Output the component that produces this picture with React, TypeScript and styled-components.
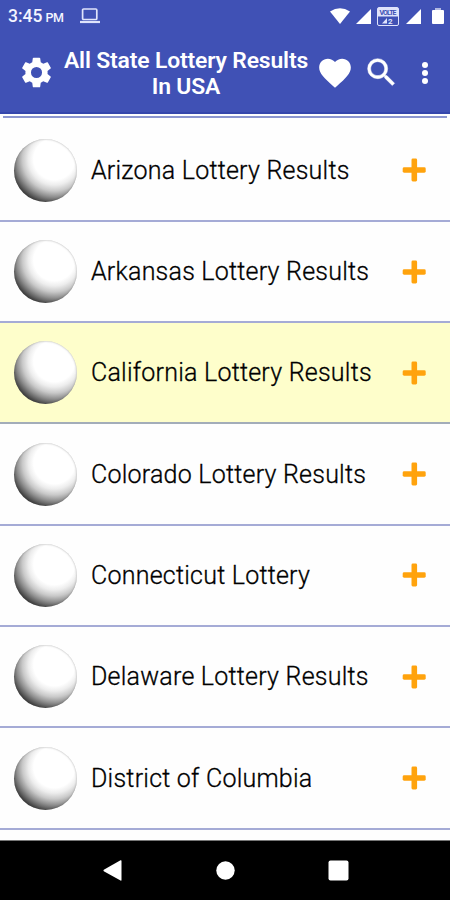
import React from 'react';
import styled, { createGlobalStyle } from 'styled-components';

const GlobalStyle = createGlobalStyle`
  * { box-sizing: border-box; }
  body { margin: 0; background: #fff; font-family: Roboto, sans-serif; }
`;

const Screen = styled.div`
  width: 450px;
  height: 900px;
  display: flex;
  flex-direction: column;
  overflow: hidden;
  background: #fefefe;
`;

const StatusBar = styled.div`
  flex: none;
  height: 32px;
  display: flex;
  align-items: center;
  justify-content: space-between;
  padding: 0 6px 0 8px;
  background: #4051b5;
  color: #f4f5ff;
`;

const StatusGroup = styled.div`
  display: flex;
  align-items: center;
`;

const Clock = styled.span`
  width: 72px;
  padding-top: 2px;
  font-size: 17.5px;
  font-weight: 500;
  line-height: 32px;
  white-space: nowrap;
`;

const Meridiem = styled.span`
  margin-left: 3px;
  font-size: 12.5px;
  letter-spacing: -0.4px;
`;

const Glyph = styled.svg<{ $gap?: number }>`
  display: block;
  flex: none;
  margin-left: ${({ $gap = 0 }) => $gap}px;
  overflow: visible;
`;

const AppBar = styled.header`
  flex: none;
  height: 82px;
  display: flex;
  align-items: flex-start;
  padding-top: 16px;
  background: #4051b5;
  border-bottom: 2px solid #3547ac;
  color: #fff;
`;

const BarButton = styled.button<{ $width: number }>`
  width: ${({ $width }) => $width}px;
  height: 49px;
  padding: 0;
  border: 0;
  background: none;
  color: inherit;
  display: flex;
  align-items: center;
  justify-content: center;
`;

const Title = styled.h1`
  width: 246px;
  margin: 0;
  font-size: 22.9px;
  font-weight: 600;
  letter-spacing: -0.15px;
  line-height: 26px;
  text-align: center;
  white-space: nowrap;
`;

const List = styled.ul`
  flex: 1;
  min-height: 0;
  overflow: hidden;
  margin: 0;
  padding: 2px 0 0;
  list-style: none;
`;

const TopRule = styled.li`
  height: 4.6px;
  margin: 0 3px;
  border-top: 2px solid #8b96d0;
`;

const Row = styled.li<{ $active?: boolean }>`
  height: 101.3px;
  display: flex;
  align-items: center;
  padding: 0 24px 0 14px;
  border-bottom: 2px solid ${({ $active }) => ($active ? '#a3adb9' : '#a5abd6')};
  background: ${({ $active }) => ($active ? '#fefecb' : '#fefefe')};
`;

const Ball = styled.span`
  flex: none;
  width: 63px;
  height: 63px;
  border-radius: 50%;
  background: radial-gradient(circle at 64% 32%, #fff 0, #fff 35%, #ededed 44%, #c9c9c9 54%, #909090 64%, #555 73%, #2a2a2a 80%);
  box-shadow: inset 0 0 2px rgba(60, 60, 60, 0.45);
`;

const StateName = styled.span`
  flex: 1;
  margin-left: 14px;
  padding-top: 1px;
  font-size: 25px;
  font-weight: 300;
  line-height: 30px;
  letter-spacing: 0.23px;
  color: #000;
  -webkit-text-stroke: 0.3px #000;
  white-space: nowrap;
`;

const NavBar = styled.nav`
  flex: none;
  height: 60px;
  display: flex;
  align-items: center;
  justify-content: center;
  background: #000;
  border-top: 1px solid #777;
`;

const NavButton = styled.button`
  width: 113px;
  height: 59px;
  padding: 0;
  border: 0;
  background: none;
  display: flex;
  align-items: center;
  justify-content: center;
`;

const states = [
  'Arizona Lottery Results',
  'Arkansas Lottery Results',
  'California Lottery Results',
  'Colorado Lottery Results',
  'Connecticut Lottery',
  'Delaware Lottery Results',
  'District of Columbia',
];

const Signal = ({ gap }: { gap: number }) => (
  <Glyph $gap={gap} width="15" height="15" viewBox="0 0 15 15" fill="#fff">
    <path d="M15 0V15H0Z" />
  </Glyph>
);

const Plus = () => (
  <Glyph width="24" height="24" viewBox="0 0 24 24" fill="#ffa30d">
    <rect x="9.5" y="0.5" width="5.6" height="23" rx="1.4" />
    <rect x="0.7" y="9.3" width="23" height="5.4" rx="1.4" />
  </Glyph>
);

export default function App() {
  return (
    <Screen>
      <GlobalStyle />
      <StatusBar>
        <StatusGroup>
          <Clock>3:45<Meridiem>PM</Meridiem></Clock>
          <Glyph width="20" height="16" viewBox="0 0 20 16" fill="none" stroke="#dfe3fb">
            <rect x="2.6" y="1" width="14.2" height="10.5" rx="1" strokeWidth="1.7" />
            <path d="M0 14H20" strokeWidth="2.2" />
          </Glyph>
        </StatusGroup>
        <StatusGroup>
          <Glyph width="20" height="16" viewBox="0 0 20 16" fill="#fff">
            <path d="M0 3.5Q10-3 20 3.5L10 16Z" />
          </Glyph>
          <Signal gap={6} />
          <Glyph $gap={6} width="22" height="19" viewBox="0 0 22 19">
            <rect x="0.5" y="0.5" width="21" height="18" rx="1.5" fill="#4051b5" stroke="#dfe3fb" />
            <rect x="1" y="1" width="20" height="8.5" fill="#dfe3fb" />
            <text x="11" y="8" textAnchor="middle" fontFamily="Roboto, sans-serif" fontWeight="700" fontSize="7" textLength="17" fill="#4051b5">VOLTE</text>
            <path d="M5 16.5L10 11V16.5Z" fill="#dfe3fb" />
            <text x="11" y="17" fontFamily="Roboto, sans-serif" fontWeight="700" fontSize="8" fill="#dfe3fb">2</text>
          </Glyph>
          <Signal gap={7} />
          <Glyph $gap={11} width="12" height="16" viewBox="0 0 12 16" fill="#fff">
            <path d="M3 0H9V2H3Z" opacity="0.6" />
            <path d="M1 2H11Q12 2 12 3V15Q12 16 11 16H1Q0 16 0 15V3Q0 2 1 2Z" />
          </Glyph>
        </StatusGroup>
      </StatusBar>
      <AppBar>
        <BarButton $width={63} aria-label="Settings">
          <Glyph $gap={10} width="37" height="37" viewBox="0 0 24 24" fill="#fff">
            <path d="M19.14 12.94c.04-.3.06-.61.06-.94s-.02-.64-.07-.94l2.03-1.58c.18-.14.23-.41.12-.61l-1.92-3.32c-.12-.22-.37-.29-.59-.22l-2.39.96c-.5-.38-1.03-.7-1.62-.94l-.36-2.54c-.04-.24-.24-.41-.48-.41h-3.84c-.24 0-.43.17-.47.41l-.36 2.54c-.59.24-1.13.57-1.62.94l-2.39-.96c-.22-.08-.47 0-.59.22L2.74 8.87c-.12.21-.08.47.12.61l2.03 1.58c-.05.3-.09.63-.09.94s.02.64.07.94l-2.03 1.58c-.18.14-.23.41-.12.61l1.92 3.32c.12.22.37.29.59.22l2.39-.96c.5.38 1.03.7 1.62.94l.36 2.54c.05.24.24.41.48.41h3.84c.24 0 .44-.17.47-.41l.36-2.54c.59-.24 1.13-.56 1.62-.94l2.39.96c.22.08.47 0 .59-.22l1.92-3.32c.12-.22.07-.47-.12-.61l-2.01-1.58zM12 15.6A3.6 3.6 0 1 1 12 8.4a3.6 3.6 0 0 1 0 7.2z" />
          </Glyph>
        </BarButton>
        <Title>All State Lottery Results<br />In USA</Title>
        <BarButton $width={52} aria-label="Favorites">
          <Glyph width="38" height="38" viewBox="0 0 24 24" fill="#fff">
            <path d="M12 21.35l-1.45-1.32C5.4 15.36 2 12.28 2 8.5 2 5.42 4.42 3 7.5 3c1.74 0 3.41.81 4.5 2.09C13.09 3.81 14.76 3 16.5 3 19.58 3 22 5.42 22 8.5c0 3.78-3.4 6.86-8.55 11.54L12 21.35z" />
          </Glyph>
        </BarButton>
        <BarButton $width={40} aria-label="Search">
          <Glyph width="37" height="37" viewBox="0 0 24 24" fill="#fff" stroke="#fff" strokeWidth="0.3">
            <path d="M15.5 14h-.79l-.28-.27A6.47 6.47 0 0 0 16 9.5 6.5 6.5 0 1 0 9.5 16c1.61 0 3.09-.59 4.23-1.57l.27.28v.79l5 4.99L20.49 19l-4.99-5zm-6 0C7.01 14 5 11.99 5 9.5S7.01 5 9.5 5 14 7.01 14 9.5 11.99 14 9.5 14z" />
          </Glyph>
        </BarButton>
        <BarButton $width={48} aria-label="More options">
          <Glyph width="8" height="22" viewBox="0 0 8 22" fill="#fff">
            <circle cx="4" cy="3" r="3" />
            <circle cx="4" cy="11" r="3" />
            <circle cx="4" cy="19" r="3" />
          </Glyph>
        </BarButton>
      </AppBar>
      <List>
        <TopRule />
        {states.map((name) => (
          <Row key={name} $active={name.startsWith('California')}>
            <Ball />
            <StateName>{name}</StateName>
            <Plus />
          </Row>
        ))}
      </List>
      <NavBar>
        <NavButton aria-label="Back">
          <Glyph width="19" height="21" viewBox="0 0 19 21" fill="#fff">
            <path d="M17.5.3Q18.5 0 18.5 1V20Q18.5 21 17.5 20.6L.8 11.3Q0 10.5.8 9.8Z" />
          </Glyph>
        </NavButton>
        <NavButton aria-label="Home">
          <Glyph width="19" height="19" viewBox="0 0 19 19" fill="#fff">
            <circle cx="9.5" cy="9.5" r="9.2" />
          </Glyph>
        </NavButton>
        <NavButton aria-label="Recent apps">
          <Glyph width="21" height="21" viewBox="0 0 21 21" fill="#fff">
            <rect x="0.5" y="0.5" width="20" height="20" rx="2" />
          </Glyph>
        </NavButton>
      </NavBar>
    </Screen>
  );
}
